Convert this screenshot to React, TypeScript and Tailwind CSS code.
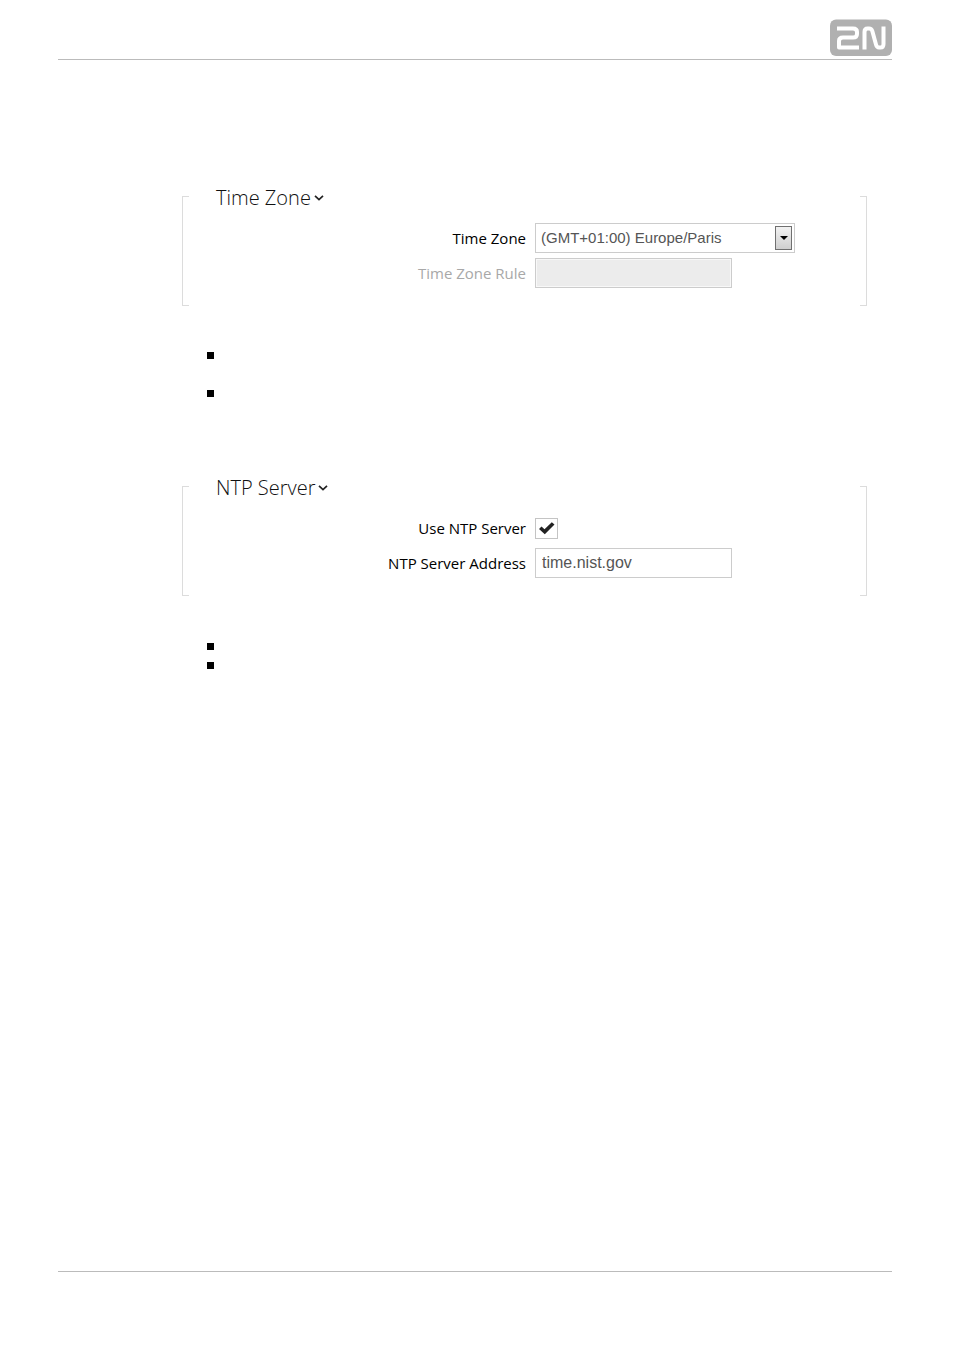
import { useState } from "react";
import type { ReactNode } from "react";

interface SectionProps {
  title: string;
  children: ReactNode;
}

function Logo() {
  return (
    <svg viewBox="0 0 62 37" className="h-[37px] w-[62px]" role="img" aria-label="2N">
      <rect y="0.500" width="62" height="36.500" rx="6" fill="#b0b0b0" />
      <g fill="none" stroke="#fff" strokeWidth="4" strokeLinejoin="round">
        <path d="M7 9.500H23Q27 9.500 27 13V15Q27 18.500 23 18.500H13Q9 18.500 9 22V28.500H29" />
        <path d="M34.500 30.500V13Q34.500 9.500 37.500 9.500H39Q41.500 9.500 42.300 12L46 25.500Q46.800 28.500 49 28.500H50.500Q53.500 28.500 53.500 25V7.500" />
      </g>
    </svg>
  );
}

function Section({ title, children }: SectionProps) {
  const [open, setOpen] = useState(true);

  return (
    <section className="flex">
      <div className="mt-3 w-[7px] shrink-0 border-y border-l border-[#dcdcdc]" />
      <div className="min-w-0 flex-1 pb-[18px]">
        <h2 className="pl-[27px]">
          <button
            type="button"
            aria-expanded={open}
            onClick={() => setOpen(!open)}
            className="flex h-7 items-center gap-[3px] text-xl font-light text-[#111]"
          >
            {title}
            <svg viewBox="0 0 10 6" className="h-[6px] w-[10px]" aria-hidden="true">
              <path d="M1 0.800L5 4.600L9 0.800" fill="none" stroke="#222" strokeWidth="1.700" />
            </svg>
          </button>
        </h2>
        {open && <div className="mt-[11px] flex flex-col gap-[5px]">{children}</div>}
      </div>
      <div className="mt-3 w-[7px] shrink-0 border-y border-r border-[#dcdcdc]" />
    </section>
  );
}

function Row({ id, label, muted, children }: { id: string; label: string; muted?: boolean; children: ReactNode }) {
  return (
    <div className="grid h-[30px] grid-cols-[337fr_325fr] items-center gap-[9px]">
      <label
        htmlFor={id}
        className={muted ? "text-right text-[15px] text-[#a8a8a8]" : "text-right text-[15px] text-black"}
      >
        {label}
      </label>
      <div className="flex items-center">{children}</div>
    </div>
  );
}

export default function App() {
  const [zone, setZone] = useState("Europe/Paris");
  const [useNtp, setUseNtp] = useState(true);
  const [address, setAddress] = useState("time.nist.gov");

  return (
    <div className="flex min-h-screen flex-col bg-white font-['Open_Sans',sans-serif]">
      <header className="mr-[62px] ml-[58px] flex justify-end border-b border-[#bbb] pt-[19px] pb-[3px]">
        <Logo />
      </header>

      <main className="flex-1 pt-[124px] pr-[87px] pl-[182px]">
        <Section title="Time Zone">
          <Row id="zone" label="Time Zone">
            <div className="relative w-[260px]">
              <select
                id="zone"
                value={zone}
                onChange={(e) => setZone(e.target.value)}
                className="block h-[30px] w-full appearance-none border border-[#ccc] bg-white pr-6 pl-[5px] font-['Liberation_Sans',sans-serif] text-[15px] text-[#555]"
              >
                <option value="Europe/Paris">(GMT+01:00) Europe/Paris</option>
              </select>
              {/* Drop-down button */}
              <span className="pointer-events-none absolute inset-y-[3px] right-[3px] flex w-[17px] items-center justify-center border border-[#707070] bg-linear-to-b from-[#f2f2f2] to-[#cfcfcf]">
                <svg viewBox="0 0 8 4" className="h-1 w-2" aria-hidden="true">
                  <path d="M0 0H8L4 4Z" fill="#000" />
                </svg>
              </span>
            </div>
          </Row>
          <Row id="rule" label="Time Zone Rule" muted>
            <input
              id="rule"
              type="text"
              disabled
              className="h-[30px] w-[197px] border border-[#ccc] bg-[#ececec] px-[6px] inset-ring inset-ring-[#f8f8f8]"
            />
          </Row>
        </Section>

        <ul className="mt-10 pl-[25px]">
          <li className="flex h-[38px] pt-[6px]">
            <span className="size-[7px] bg-black" />
          </li>
          <li className="flex h-[19px] pt-[6px]">
            <span className="size-[7px] bg-black" />
          </li>
        </ul>

        <div className="mt-[71px]">
          <Section title="NTP Server">
            <Row id="use-ntp" label="Use NTP Server">
              <span className="relative flex">
                <input
                  id="use-ntp"
                  type="checkbox"
                  checked={useNtp}
                  onChange={(e) => setUseNtp(e.target.checked)}
                  className="h-[21px] w-[23px] appearance-none border border-[#c4c4c4] bg-white"
                />
                {useNtp && (
                  <svg
                    viewBox="0 0 23 21"
                    className="pointer-events-none absolute inset-0 h-[21px] w-[23px]"
                    aria-hidden="true"
                  >
                    <path d="M4 11L6.500 8.500L9.500 11.300L16.800 4.200L19.500 6.500L9.800 16.200Z" fill="#222" />
                  </svg>
                )}
              </span>
            </Row>
            <Row id="address" label="NTP Server Address">
              <input
                id="address"
                type="text"
                value={address}
                onChange={(e) => setAddress(e.target.value)}
                className="h-[30px] w-[197px] border border-[#ccc] bg-white px-[6px] font-['Liberation_Sans',sans-serif] text-base text-[#555]"
              />
            </Row>
          </Section>
        </div>

        <ul className="mt-[41px] pl-[25px]">
          <li className="flex h-[19px] pt-[6px]">
            <span className="size-[7px] bg-black" />
          </li>
          <li className="flex h-[19px] pt-[6px]">
            <span className="size-[7px] bg-black" />
          </li>
        </ul>
      </main>

      <footer className="mr-[62px] ml-[58px] border-t border-[#bbb] pb-[78px]" />
    </div>
  );
}
